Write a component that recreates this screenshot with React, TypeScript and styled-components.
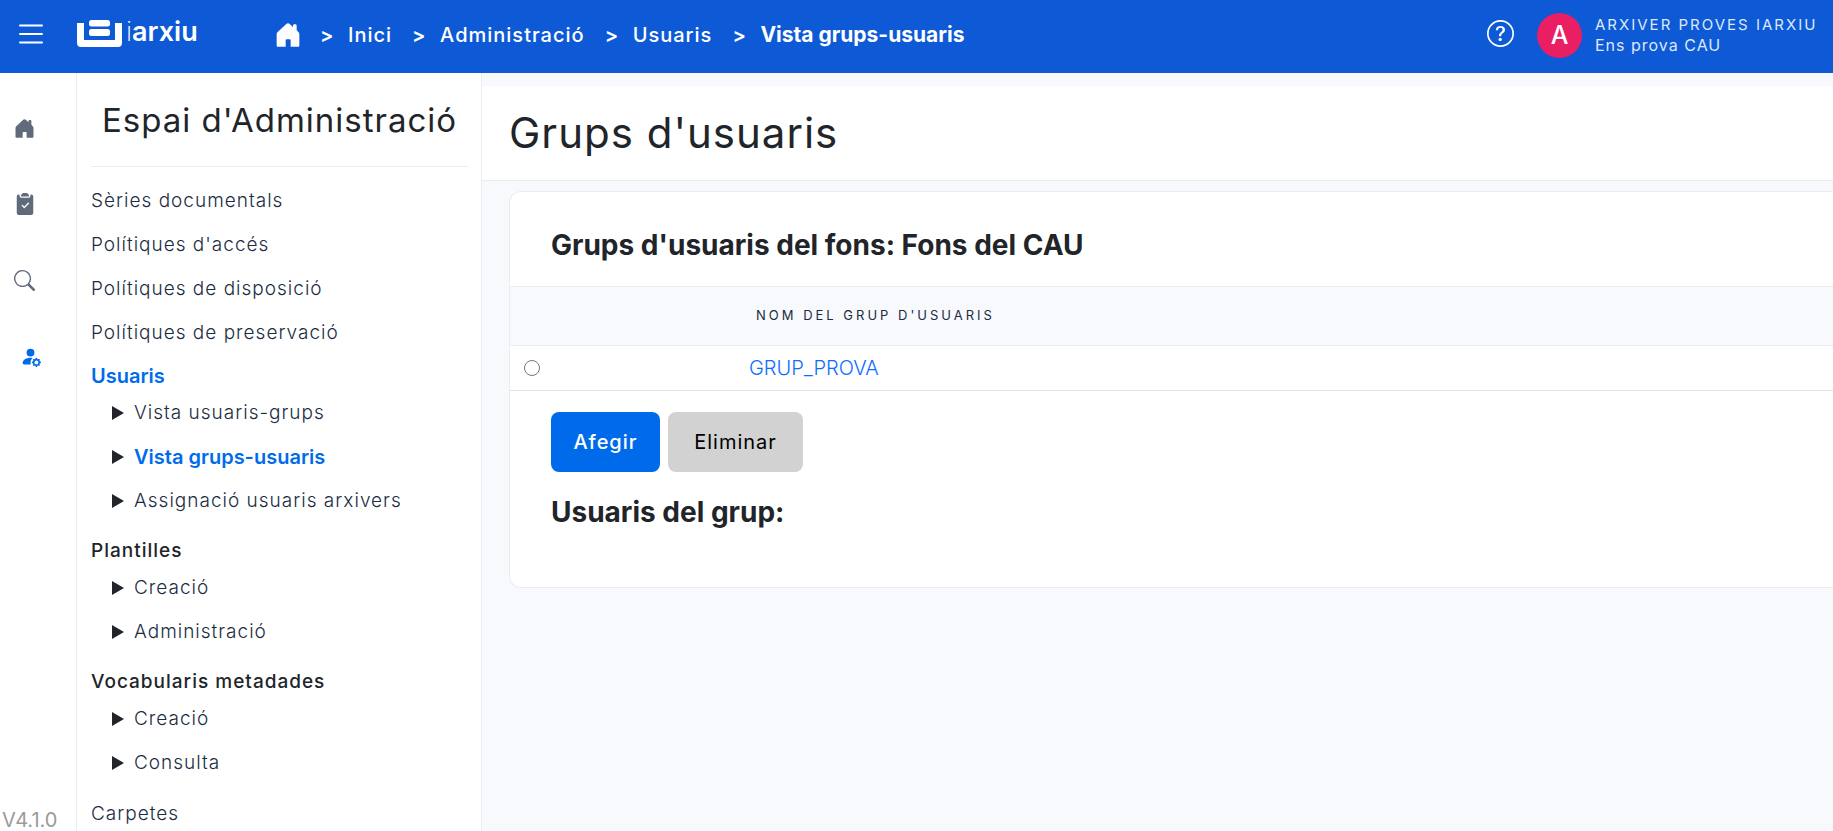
import React from 'react';
import styled, { createGlobalStyle, css } from 'styled-components';
import { BsClipboard2CheckFill, BsPersonFillGear, BsQuestionCircle, BsSearch } from 'react-icons/bs';

const color = {
  header: '#0e5ad6',
  primary: '#006bea',
  link: '#0d6efd',
  ink: '#212529',
  menu: '#1b2c42',
  icon: '#5f6b7a',
  line: '#ebecef',
  canvas: '#f8f9fd',
  avatar: '#e91e63',
};

const GlobalStyle = createGlobalStyle`
  *, *::before, *::after { box-sizing: border-box; }
  body { margin: 0; background: ${color.canvas}; color: ${color.ink}; font-family: Inter, "Noto Sans", sans-serif; }
  h1, h2, h3, ul, ol, p { margin: 0; padding: 0; font-weight: 400; }
  ul, ol { list-style: none; }
  a { color: inherit; text-decoration: none; }
  button { font-family: inherit; border: 0; cursor: pointer; }
  svg { display: block; }
`;

const Shell = styled.div`
  display: grid;
  grid-template-rows: auto minmax(0, 1fr);
  height: 100vh;
  overflow: hidden;
`;

const TopBar = styled.header`
  display: flex;
  align-items: center;
  height: 73px;
  padding: 0 9px 3px 19px;
  background: ${color.header};
  color: #fff;
`;

const IconButton = styled.button`
  padding: 0 0 3px;
  background: none;
  color: inherit;
`;

const LogoLink = styled.a`
  display: flex;
  align-items: center;
  gap: 4px;
  width: 199px;
  margin-left: 34px;
  padding-bottom: 3px;
`;

const LogoText = styled.span<{ $thin?: boolean }>`
  font-size: 27px;
  line-height: 24px;
  font-weight: ${({ $thin }) => ($thin ? 200 : 600)};
`;

const LogoWord = styled.span`
  display: flex;
  padding-bottom: 3px;
`;

const Crumbs = styled.ol`
  display: flex;
  align-items: center;
  font-size: 20px;
  line-height: 28px;
  letter-spacing: 1px;
  font-weight: 500;
`;

const Crumb = styled.li<{ $current?: boolean }>`
  display: flex;
  align-items: center;
  ${({ $current }) => $current && css`font-size: 21px; font-weight: 700; letter-spacing: 0;`}
`;

const Separator = styled.span`
  width: 14px;
  margin: 0 14px 0 20px;
  font-size: 20px;
  font-weight: 600;
`;

const UserArea = styled.div`
  display: flex;
  align-items: center;
  margin-left: auto;
`;

const Avatar = styled.span`
  display: grid;
  place-items: center;
  width: 45px;
  height: 45px;
  margin: 0 13px 0 23px;
  border-radius: 50%;
  background: ${color.avatar};
  font-size: 25px;
  font-weight: 500;
`;

const UserText = styled.div`
  display: grid;
  width: 229px;
  line-height: 20px;
  color: #dce8fa;
`;

const UserName = styled.span`
  font-size: 15px;
  letter-spacing: 2px;
`;

const UserBody = styled.span`
  font-size: 16px;
  letter-spacing: 1px;
`;

const Body = styled.div`
  display: grid;
  grid-template-columns: 77px 405px minmax(0, 1fr);
  min-height: 0;
`;

const Rail = styled.nav`
  display: flex;
  flex-direction: column;
  justify-content: space-between;
  padding-top: 17px;
  background: #fff;
  border-right: 1px solid ${color.line};
`;

const RailLink = styled.a<{ $active?: boolean }>`
  display: grid;
  align-items: center;
  justify-items: center;
  width: ${({ $active }) => ($active ? '61px' : '49px')};
  height: 76px;
  color: ${({ $active }) => ($active ? color.primary : color.icon)};
`;

const Version = styled.p`
  padding-left: 2px;
  font-size: 20px;
  line-height: 22px;
  color: #9a9a9a;
`;

const Sidebar = styled.aside`
  padding: 0 13px 0 14px;
  background: #fff;
  border-right: 1px solid ${color.line};
  overflow-y: auto;
  scrollbar-width: none;
`;

const SidebarTitle = styled.h2`
  padding: 27px 0 26px;
  margin-bottom: 12px;
  border-bottom: 1px solid ${color.line};
  font-size: 33px;
  line-height: 40px;
  letter-spacing: 1px;
  text-align: center;
  white-space: nowrap;
`;

const activeText = css`
  color: ${color.primary};
  font-size: 20px;
  font-weight: 600;
  letter-spacing: 0;
`;

const MenuLink = styled.a<{ $active?: boolean }>`
  display: block;
  padding: 8px 0;
  font-size: 19px;
  line-height: 28px;
  letter-spacing: 1px;
  font-weight: 300;
  color: ${color.menu};
  ${({ $active }) => $active && activeText}
`;

const GroupTitle = styled.h3<{ $active?: boolean }>`
  padding: 7px 0 1px;
  font-size: 19px;
  line-height: 28px;
  letter-spacing: 1px;
  font-weight: 500;
  ${({ $active }) => $active && activeText}
`;

const SubMenu = styled.ul`
  padding: 0 0 7px 21px;
`;

const SubItem = styled.li`
  display: flex;
  align-items: center;
  gap: 10px;

  &::before {
    content: '';
    border: 7px solid transparent;
    border-left: 12px solid ${color.ink};
    border-right: 0;
  }
`;

const Main = styled.main`
  padding-top: 13px;
  overflow: hidden;
`;

const PageTitle = styled.h1`
  padding: 23px 27px;
  background: #fff;
  border-bottom: 1px solid ${color.line};
  font-size: 42px;
  line-height: 48px;
  letter-spacing: 1px;
`;

const Card = styled.section`
  margin: 10px 0 0 27px;
  padding-bottom: 57px;
  background: #fff;
  border: 1px solid ${color.line};
  border-right: 0;
  border-radius: 12px 0 0 12px;
`;

const CardTitle = styled.h2<{ $top: number; $bottom?: number }>`
  padding: ${({ $top, $bottom = 0 }) => `${$top}px 41px ${$bottom}px`};
  font-size: 28px;
  line-height: 36px;
  font-weight: 700;
`;

const Table = styled.table`
  width: 100%;
  border-collapse: collapse;
  table-layout: fixed;
  text-align: left;
`;

const HeadCell = styled.th<{ $narrow?: boolean }>`
  width: ${({ $narrow }) => ($narrow ? '234px' : 'auto')};
  height: 59px;
  padding: 0 12px 2px;
  background: ${color.canvas};
  border-top: 1px solid ${color.line};
  border-bottom: 1px solid ${color.line};
  font-size: 13px;
  font-weight: 400;
  letter-spacing: 3px;
  color: ${color.menu};
`;

const Cell = styled.td<{ $radio?: boolean }>`
  height: 45px;
  padding: ${({ $radio }) => ($radio ? '0 14px' : '0 5px')};
  border-bottom: 1px solid #e0e2e6;
  font-size: 20px;
  font-weight: 300;
  color: ${color.link};
`;

const Radio = styled.input`
  appearance: none;
  display: block;
  width: 16px;
  height: 16px;
  margin: 0;
  border: 1px solid #767676;
  border-radius: 50%;
  background: #fff;

  &:checked { border: 5px solid ${color.primary}; }
`;

const Actions = styled.div`
  display: flex;
  gap: 8px;
  padding: 21px 41px 0;
`;

const ActionButton = styled.button<{ $secondary?: boolean }>`
  min-width: ${({ $secondary }) => ($secondary ? '135px' : '109px')};
  height: 60px;
  padding: 0 20px;
  border-radius: 8px;
  background: ${({ $secondary }) => ($secondary ? '#d2d2d2' : color.primary)};
  color: ${({ $secondary }) => ($secondary ? '#000' : '#fff')};
  font-size: 20px;
  font-weight: ${({ $secondary }) => ($secondary ? 400 : 500)};
  letter-spacing: 1px;
`;

const House = ({ size }: { size: number }) => (
  <svg width={size} height={size} viewBox="0 0 70 72" fill="currentColor" aria-hidden="true">
    <path d="M1 36V33Q1 30 4 27L30 3Q35-1 40 3L50 12V8Q50 4 54 4H57Q61 4 61 8V21L66 27Q69 30 69 34V68Q69 71 66 71H43V52Q43 49 40 49H31Q28 49 28 52V71H4Q1 71 1 68Z" />
  </svg>
);

const MenuLines = () => (
  <svg width="24" height="20" viewBox="0 0 24 20" stroke="currentColor" strokeWidth="2" strokeLinecap="round" aria-hidden="true">
    <path d="M1 1.5h22M1 10h22M1 18.500h22" />
  </svg>
);

const LogoMark = () => (
  <svg width="45" height="27" viewBox="0 0 45 27" fill="currentColor" aria-hidden="true">
    <path d="M0 3H7V20H38V3H45V23Q45 27 41 27H4Q0 27 0 23Z" />
    <rect x="12" y="0" width="21" height="6.500" rx="2.500" />
    <rect x="12" y="9" width="21" height="7" rx="2.500" />
  </svg>
);

type Entry = { label: string; active?: boolean; children?: { label: string; active?: boolean }[] };

const menu: Entry[] = [
  { label: 'Sèries documentals' },
  { label: "Polítiques d'accés" },
  { label: 'Polítiques de disposició' },
  { label: 'Polítiques de preservació' },
  {
    label: 'Usuaris',
    active: true,
    children: [
      { label: 'Vista usuaris-grups' },
      { label: 'Vista grups-usuaris', active: true },
      { label: 'Assignació usuaris arxivers' },
    ],
  },
  { label: 'Plantilles', children: [{ label: 'Creació' }, { label: 'Administració' }] },
  { label: 'Vocabularis metadades', children: [{ label: 'Creació' }, { label: 'Consulta' }] },
  { label: 'Carpetes' },
];

const crumbs = ['Inici', 'Administració', 'Usuaris', 'Vista grups-usuaris'];

export default function App() {
  return (
    <>
      <GlobalStyle />
      <Shell>
        <TopBar>
          <IconButton aria-label="Menú"><MenuLines /></IconButton>
          <LogoLink href="#inici">
            <LogoMark />
            <LogoWord>
              <LogoText $thin>i</LogoText>
              <LogoText>arxiu</LogoText>
            </LogoWord>
          </LogoLink>
          <Crumbs>
            <Crumb><a href="#inici" aria-label="Pàgina d'inici"><House size={24} /></a></Crumb>
            {crumbs.map((label, i) => (
              <Crumb key={label} $current={i === crumbs.length - 1}>
                <Separator>&gt;</Separator>
                <a href="#ruta">{label}</a>
              </Crumb>
            ))}
          </Crumbs>
          <UserArea>
            <IconButton aria-label="Ajuda"><BsQuestionCircle size={27} /></IconButton>
            <Avatar>A</Avatar>
            <UserText>
              <UserName>ARXIVER PROVES IARXIU</UserName>
              <UserBody>Ens prova CAU</UserBody>
            </UserText>
          </UserArea>
        </TopBar>
        <Body>
          <Rail>
            <div>
              <RailLink href="#inici" aria-label="Inici"><House size={19} /></RailLink>
              <RailLink href="#tasques" aria-label="Tasques"><BsClipboard2CheckFill size={22} /></RailLink>
              <RailLink href="#cerca" aria-label="Cerca"><BsSearch size={21} /></RailLink>
              <RailLink href="#administracio" aria-label="Administració" $active><BsPersonFillGear size={21} /></RailLink>
            </div>
            <Version>V4.1.0</Version>
          </Rail>
          <Sidebar>
            <SidebarTitle>Espai d'Administració</SidebarTitle>
            <ul>
              {menu.map((entry) => (
                <li key={entry.label}>
                  {entry.children ? (
                    <>
                      <GroupTitle $active={entry.active}>{entry.label}</GroupTitle>
                      <SubMenu>
                        {entry.children.map((child) => (
                          <SubItem key={child.label}>
                            <MenuLink href="#menu" $active={child.active}>{child.label}</MenuLink>
                          </SubItem>
                        ))}
                      </SubMenu>
                    </>
                  ) : (
                    <MenuLink href="#menu">{entry.label}</MenuLink>
                  )}
                </li>
              ))}
            </ul>
          </Sidebar>
          <Main>
            <PageTitle>Grups d'usuaris</PageTitle>
            <Card>
              <CardTitle $top={35} $bottom={23}>Grups d'usuaris del fons: Fons del CAU</CardTitle>
              <Table>
                <thead>
                  <tr>
                    <HeadCell $narrow aria-label="Selecció" />
                    <HeadCell>NOM DEL GRUP D'USUARIS</HeadCell>
                  </tr>
                </thead>
                <tbody>
                  <tr>
                    <Cell $radio><Radio type="radio" name="grup" id="grup-prova" aria-label="GRUP_PROVA" /></Cell>
                    <Cell><a href="#grup">GRUP_PROVA</a></Cell>
                  </tr>
                </tbody>
              </Table>
              <Actions>
                <ActionButton type="button">Afegir</ActionButton>
                <ActionButton type="button" $secondary>Eliminar</ActionButton>
              </Actions>
              <CardTitle $top={22}>Usuaris del grup:</CardTitle>
            </Card>
          </Main>
        </Body>
      </Shell>
    </>
  );
}
